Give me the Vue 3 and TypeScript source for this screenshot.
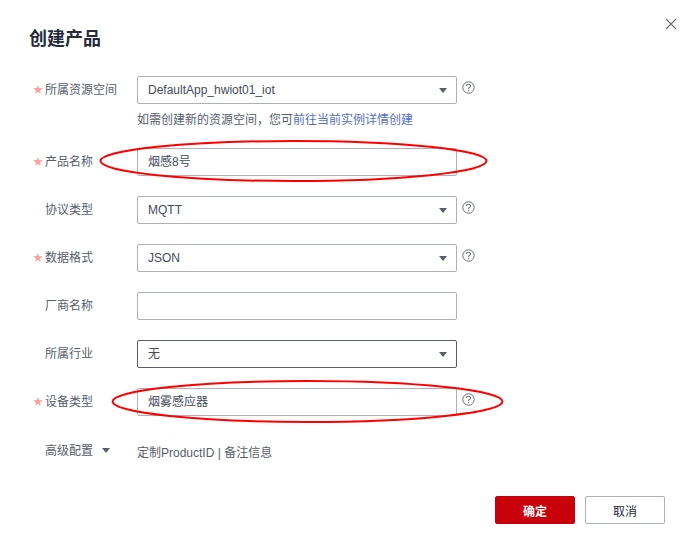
<script setup lang="ts">
interface Field {
  label: string;
  value: string;
  required?: boolean;
  select?: boolean;
  help?: boolean;
  active?: boolean;
}

const fields: Field[] = [
  { label: "所属资源空间", value: "DefaultApp_hwiot01_iot", required: true, select: true, help: true },
  { label: "产品名称", value: "烟感8号", required: true },
  { label: "协议类型", value: "MQTT", select: true, help: true },
  { label: "数据格式", value: "JSON", required: true, select: true, help: true },
  { label: "厂商名称", value: "" },
  { label: "所属行业", value: "无", select: true, active: true },
  { label: "设备类型", value: "烟雾感应器", required: true, help: true },
];
</script>

<template>
  <div class="dialog">
    <svg class="close" width="12" height="12" viewBox="0 0 12 12">
      <path d="M1 1l10 10M11 1L1 11" stroke="#6a6d7c" stroke-width="1.1" fill="none" />
    </svg>
    <h2 class="title">创建产品</h2>

    <div class="form">
      <div v-for="(field, i) in fields" :key="field.label" class="row">
        <div class="row-main">
          <label class="label">
            <span class="star">{{ field.required ? "★" : "" }}</span>
            {{ field.label }}
          </label>
          <div :class="['box', { 'box-active': field.active }]">
            <span>{{ field.value }}</span>
            <i v-if="field.select" class="caret"></i>
          </div>
          <svg v-if="field.help" class="help" width="13" height="13" viewBox="0 0 13 13">
            <circle cx="6.5" cy="6.5" r="5.7" stroke="#6a6d7c" fill="none" />
            <path
              d="M4.5 5.1c0-1.2.9-1.9 2-1.9s2 .7 2 1.7c0 1.4-2 1.5-2 3"
              stroke="#6a6d7c"
              stroke-width="1.1"
              fill="none"
            />
            <rect x="6" y="9" width="1.1" height="1.2" fill="#6a6d7c" />
          </svg>
        </div>
        <p v-if="i === 0" class="hint">
          如需创建新的资源空间，您可<a class="link">前往当前实例详情创建</a>
        </p>
      </div>

      <div class="row advanced">
        <div class="label advanced-label">
          <span class="star"></span>
          高级配置
          <i class="caret caret-small"></i>
        </div>
        <span class="advanced-text">定制ProductID | 备注信息</span>
      </div>
    </div>

    <div class="footer">
      <button class="btn btn-primary">确定</button>
      <button class="btn">取消</button>
    </div>

    <svg class="marks" width="690" height="548" viewBox="0 0 690 548">
      <ellipse cx="293.5" cy="161" rx="193" ry="20" />
      <ellipse cx="307.5" cy="401.5" rx="195" ry="20.5" />
    </svg>
  </div>
</template>

<style>
html,
body {
  margin: 0;
  background: #fff;
}
</style>

<style scoped>
.dialog {
  position: relative;
  width: 690px;
  height: 548px;
  box-sizing: border-box;
  padding: 28px 25px 0 29px;
  overflow: hidden;
  background: #fff;
  color: #575d6c;
  font-family: "Liberation Sans", "Noto Sans CJK SC", sans-serif;
  font-size: 12px;
}

.close {
  position: absolute;
  top: 18px;
  right: 13px;
}

.title {
  margin: 0 0 26px;
  color: #252b3a;
  font-size: 18px;
  font-weight: 700;
  line-height: 22px;
}

.form {
  display: flex;
  flex-direction: column;
  gap: 20px;
}

.row-main {
  display: flex;
  align-items: flex-start;
}

.label {
  display: flex;
  align-items: center;
  width: 108px;
  height: 28px;
  color: #575d6c;
  line-height: 28px;
}

.star {
  width: 16px;
  padding-left: 4px;
  box-sizing: border-box;
  color: #f9a09c;
  font-size: 10px;
  flex: none;
}

.box {
  display: flex;
  align-items: center;
  justify-content: space-between;
  box-sizing: border-box;
  width: 320px;
  height: 28px;
  padding: 0 10px;
  border: 1px solid #adb0b8;
  border-radius: 2px;
  color: #454b5a;
  line-height: 26px;
}

.box-active {
  border-color: #575d6c;
}

.caret {
  display: block;
  width: 0;
  height: 0;
  margin-right: -1px;
  border-left: 4px solid transparent;
  border-right: 4px solid transparent;
  border-top: 5px solid #575d6c;
}

.caret-small {
  margin: 0 0 0 9px;
}

.help {
  margin: 5px 0 0 5px;
}

.hint {
  margin: 8px 0 0 108px;
  line-height: 16px;
  color: #575d6c;
  height: 16px;
}

.link {
  color: #526ecc;
}

.advanced {
  display: flex;
  align-items: center;
  height: 28px;
  margin-top: 1px;
}

.advanced-label {
  margin-top: -1px;
}

.advanced-text {
  color: #575d6c;
  margin-top: 1px;
}

.footer {
  position: absolute;
  top: 496px;
  right: 25px;
  display: flex;
  gap: 10px;
}

.btn {
  box-sizing: border-box;
  width: 80px;
  height: 28px;
  padding: 0;
  border: 1px solid #adb0b8;
  border-radius: 2px;
  background: #fff;
  color: #252b3a;
  font: inherit;
}

.btn-primary {
  border-color: #c7000b;
  background: #c7000b;
  color: #fff;
  font-weight: 700;
}

.marks {
  position: absolute;
  top: 0;
  left: 0;
  pointer-events: none;
}

.marks ellipse {
  fill: none;
  stroke: #ff0000;
  stroke-width: 2;
}
</style>
